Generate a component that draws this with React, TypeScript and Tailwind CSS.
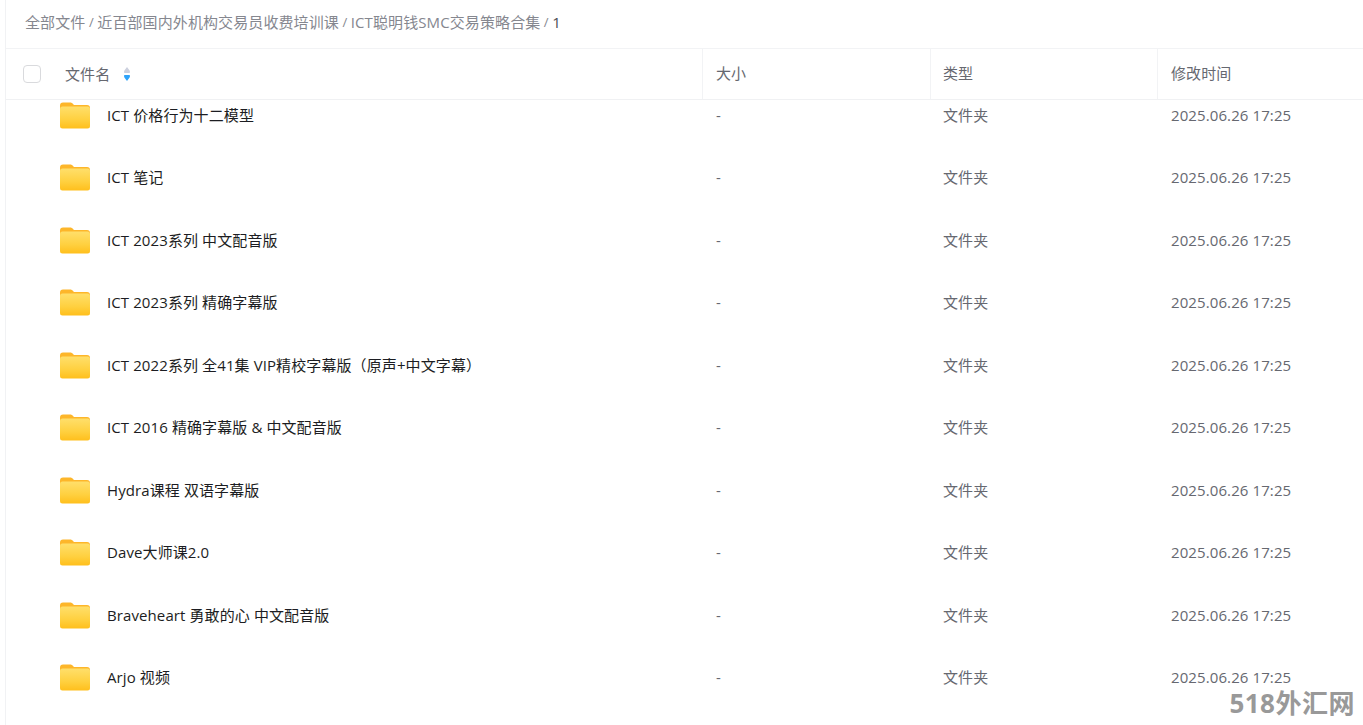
const rows = [
  "ICT 价格行为十二模型",
  "ICT 笔记",
  "ICT 2023系列 中文配音版",
  "ICT 2023系列 精确字幕版",
  "ICT 2022系列 全41集 VIP精校字幕版（原声+中文字幕）",
  "ICT 2016 精确字幕版 & 中文配音版",
  "Hydra课程 双语字幕版",
  "Dave大师课2.0",
  "Braveheart 勇敢的心 中文配音版",
  "Arjo 视频",
];

const font = { fontFamily: '"Open Sans", "Noto Sans CJK SC", sans-serif' };

function FolderIcon() {
  return (
    <svg width="32" height="28" viewBox="0 0 32 28" className="shrink-0">
      <defs>
        <linearGradient id="folderFront" x1="0" y1="0" x2="0" y2="1">
          <stop offset="0" stopColor="#ffdf6b" />
          <stop offset="0.6" stopColor="#ffd03f" />
          <stop offset="1" stopColor="#ffbf1c" />
        </linearGradient>
      </defs>
      <path d="M1 4.5C1 2.500 2 1.500 4 1.500h7c1.500 0 2.200.5 3 1.500l1 1h13c2 0 3 1 3 3v4H1z" fill="#fdb62a" />
      <rect x="1" y="5.500" width="30" height="22" rx="2.500" fill="url(#folderFront)" />
    </svg>
  );
}

function SortIcon() {
  return (
    <svg width="8" height="16" viewBox="0 0 8 16" className="shrink-0">
      <path d="M4 1C2.500 3 1 4.500 1 6c0 .8.500 1 1 1h4c.500 0 1-.2 1-1 0-1.500-1.500-3-3-5z" fill="#ccd0de" />
      <path d="M4 15c1.500-2 3-3.500 3-5 0-.8-.500-1-1-1H2c-.500 0-1 .2-1 1 0 1.500 1.500 3 3 5z" fill="#2ea3fa" />
    </svg>
  );
}

export default function App() {
  return (
    <div className="relative h-[725px] overflow-hidden bg-white text-[15px] tracking-[0.1px]" style={font}>
      <div className="ml-[5px] flex h-full flex-col border-l border-[#f1f2f4]">
        {/* Breadcrumb */}
        <div className="flex h-[49px] shrink-0 items-center gap-[3.5px] border-b border-[#f2f3f5] pb-[3px] pl-[19px] text-[#85878f]">
          <span>全部文件</span>
          <span className="text-[13px]">/</span>
          <span>近百部国内外机构交易员收费培训课</span>
          <span className="text-[13px]">/</span>
          <span>ICT聪明钱SMC交易策略合集</span>
          <span className="text-[13px]">/</span>
          <span className="text-[#4a4c52]">1</span>
        </div>

        {/* Table header */}
        <div className="relative z-10 flex h-[51px] shrink-0 items-center border-b border-[#f0f1f3] bg-white text-[#666870]">
          <div className="flex h-full w-[697px] items-center border-r border-[#f2f3f5] pl-[17px]">
            <div className="h-[18px] w-[18px] rounded-[4px] border border-[#d9dadd]" />
            <span className="ml-[24px]">文件名</span>
            <span className="ml-[13px]">
              <SortIcon />
            </span>
          </div>
          <div className="flex h-full w-[228px] items-center border-r border-[#f2f3f5] pb-[2px] pl-[13px]">大小</div>
          <div className="flex h-full w-[227px] items-center border-r border-[#f2f3f5] pb-[2px] pl-[12px]">类型</div>
          <div className="flex h-full flex-1 items-center pb-[2px] pl-[13px]">修改时间</div>
        </div>

        {/* File rows */}
        <div className="-mt-[16.5px] flex-1 overflow-hidden">
          {rows.map((name) => (
            <div key={name} className="flex h-[62.5px] items-center text-[#666870]">
              <div className="flex w-[697px] items-center pl-[53px] text-[#1c1d22]">
                <FolderIcon />
                <span className="ml-[16px] whitespace-pre">{name}</span>
              </div>
              <div className="w-[228px] pl-[13px]">-</div>
              <div className="w-[227px] pl-[12px]">文件夹</div>
              <div className="flex-1 pl-[13px]">2025.06.26 17:25</div>
            </div>
          ))}
        </div>
      </div>

      {/* Watermark */}
      <div className="absolute bottom-[8px] right-[8px] text-[26px] leading-[28px] font-bold tracking-[0.5px] text-[#999999]">
        518外汇网
      </div>
    </div>
  );
}
